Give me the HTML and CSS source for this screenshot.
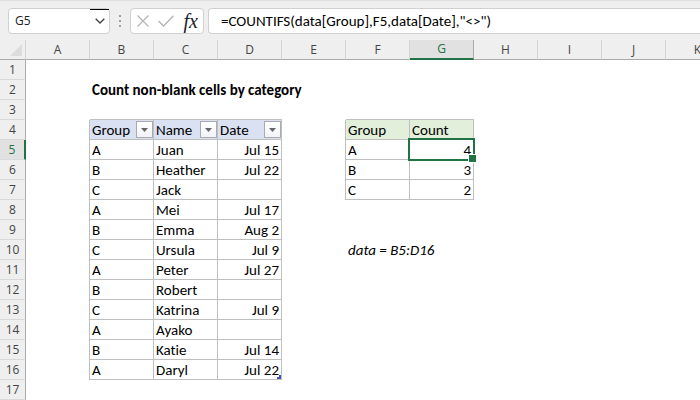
FILE: index.html
```
<!DOCTYPE html>
<html lang="en">
<head>
    <meta charset="UTF-8">
    <meta name="viewport" content="width=device-width, initial-scale=1.0">
    <title>Count non-blank cells by category</title>
    <link rel="stylesheet" href="styles.css">
</head>
<body>
    <div class="formula-bar">
        <div class="box name-box">
            <input type="text" value="G5" aria-label="Name box">
            <button type="button" aria-label="Show names">
                <svg width="10" height="6" viewBox="0 0 10 6"><path d="M.7 .7 5 5 9.3 .7" fill="none" stroke="#444" stroke-width="1.4"/></svg>
            </button>
        </div>
        <svg class="grip" width="2" height="12" viewBox="0 0 2 12"><path d="M0 0h2v2H0zM0 5h2v2H0zM0 10h2v2H0z" fill="#a0a0a0"/></svg>
        <div class="box tools">
            <button type="button" aria-label="Cancel">
                <svg width="12" height="12" viewBox="0 0 12 12"><path d="M.5 .5l11 11M11.5 .5l-11 11" fill="none" stroke="#b4b4b4" stroke-width="1.2"/></svg>
            </button>
            <button type="button" aria-label="Enter">
                <svg width="16" height="12" viewBox="0 0 16 12"><path d="M.5 6l5 5L15.5 .7" fill="none" stroke="#b4b4b4" stroke-width="1.3"/></svg>
            </button>
            <button type="button" class="fx" aria-label="Insert function">fx</button>
        </div>
        <div class="box formula">
            <input type="text" value="=COUNTIFS(data[Group],F5,data[Date],&quot;&lt;&gt;&quot;)" aria-label="Formula">
        </div>
    </div>

    <div class="sheet">
        <table>
            <colgroup>
                <col class="num">
                <col span="11">
            </colgroup>
            <thead>
                <tr>
                    <th class="corner"><svg width="12" height="12" viewBox="0 0 12 12"><path d="M12 0v12H0z" fill="#dcdcdc"/></svg></th>
                    <th>A</th><th>B</th><th>C</th><th>D</th><th>E</th><th>F</th><th class="active">G</th><th>H</th><th>I</th><th>J</th><th>K</th>
                </tr>
            </thead>
            <tbody>
                <tr><th>1</th><td colspan="11"></td></tr>
                <tr><th>2</th><td></td><td class="title" colspan="10">Count non-blank cells by category</td></tr>
                <tr><th>3</th><td></td><td class="line" colspan="3"></td><td></td><td class="line" colspan="2"></td><td colspan="4"></td></tr>
                <tr>
                    <th>4</th><td class="edge"></td>
                    <td class="cell blue"><div class="filter">Group<button type="button" aria-label="Filter Group"><svg width="7" height="4" viewBox="0 0 7 4"><path d="M0 0h7L3.5 4z"/></svg></button></div></td>
                    <td class="cell blue"><div class="filter">Name<button type="button" aria-label="Filter Name"><svg width="7" height="4" viewBox="0 0 7 4"><path d="M0 0h7L3.5 4z"/></svg></button></div></td>
                    <td class="cell blue"><div class="filter">Date<button type="button" aria-label="Filter Date"><svg width="7" height="4" viewBox="0 0 7 4"><path d="M0 0h7L3.5 4z"/></svg></button></div></td>
                    <td class="edge"></td><td class="cell green">Group</td><td class="cell green">Count</td><td colspan="4"></td>
                </tr>
                <tr><th class="active">5</th><td class="edge"></td><td class="cell">A</td><td class="cell">Juan</td><td class="cell right">Jul 15</td><td class="edge"></td><td class="cell">A</td><td class="cell right selected">4</td><td colspan="4"></td></tr>
                <tr><th>6</th><td class="edge"></td><td class="cell">B</td><td class="cell">Heather</td><td class="cell right">Jul 22</td><td class="edge"></td><td class="cell">B</td><td class="cell right">3</td><td colspan="4"></td></tr>
                <tr><th>7</th><td class="edge"></td><td class="cell">C</td><td class="cell">Jack</td><td class="cell right"></td><td class="edge"></td><td class="cell">C</td><td class="cell right">2</td><td colspan="4"></td></tr>
                <tr><th>8</th><td class="edge"></td><td class="cell">A</td><td class="cell">Mei</td><td class="cell right">Jul 17</td><td colspan="7"></td></tr>
                <tr><th>9</th><td class="edge"></td><td class="cell">B</td><td class="cell">Emma</td><td class="cell right">Aug 2</td><td colspan="7"></td></tr>
                <tr><th>10</th><td class="edge"></td><td class="cell">C</td><td class="cell">Ursula</td><td class="cell right">Jul 9</td><td></td><td class="note" colspan="6">data = B5:D16</td></tr>
                <tr><th>11</th><td class="edge"></td><td class="cell">A</td><td class="cell">Peter</td><td class="cell right">Jul 27</td><td colspan="7"></td></tr>
                <tr><th>12</th><td class="edge"></td><td class="cell">B</td><td class="cell">Robert</td><td class="cell right"></td><td colspan="7"></td></tr>
                <tr><th>13</th><td class="edge"></td><td class="cell">C</td><td class="cell">Katrina</td><td class="cell right">Jul 9</td><td colspan="7"></td></tr>
                <tr><th>14</th><td class="edge"></td><td class="cell">A</td><td class="cell">Ayako</td><td class="cell right"></td><td colspan="7"></td></tr>
                <tr><th>15</th><td class="edge"></td><td class="cell">B</td><td class="cell">Katie</td><td class="cell right">Jul 14</td><td colspan="7"></td></tr>
                <tr><th>16</th><td class="edge"></td><td class="cell">A</td><td class="cell">Daryl</td><td class="cell right table-end">Jul 22</td><td colspan="7"></td></tr>
                <tr><th>17</th><td colspan="11"></td></tr>
            </tbody>
        </table>
    </div>
</body>
</html>
```
FILE: styles.css
```
* {
    box-sizing: border-box;
}
body {
    margin: 0;
    background: white;
    font-family: Carlito, Lato, sans-serif;
    font-size: 15px;
    font-variant-ligatures: none;
    color: black;
}
button, input {
    border: none;
    background: none;
    padding: 0;
    margin: 0;
    font: inherit;
    color: inherit;
}
svg {
    display: block;
}

/* Formula bar */
.formula-bar {
    display: flex;
    align-items: center;
    height: 40px;
    padding-left: 8px;
    border-top: 1px solid #dedede;
    background: #efefef;
    overflow: hidden;
}
.box {
    display: flex;
    align-items: center;
    height: 26px;
    border: 1px solid #d0d0d0;
    border-radius: 4px;
    background: white;
}
.name-box {
    width: 102px;
    padding-left: 6px;
    font-family: "Open Sans", sans-serif;
    font-size: 12px;
    color: #222;
}
.name-box input {
    flex: 1;
    min-width: 0;
}
.name-box button {
    display: flex;
    align-items: center;
    justify-content: center;
    width: 19px;
    height: 24px;
    border-top: 1px solid black;
}
.grip {
    margin: 0 9px;
}
.tools {
    width: 74px;
    padding: 0 5px 0 6px;
    justify-content: space-between;
}
.fx {
    font-family: "Liberation Serif", serif;
    font-size: 20px;
    font-style: italic;
    line-height: 20px;
    color: #222;
}
.formula {
    flex: 1;
    margin-left: 4px;
    padding-left: 12px;
    border-right: none;
    border-radius: 4px 0 0 4px;
}
.formula input {
    width: 100%;
}

/* Grid */
.sheet {
    overflow: hidden;
}
table {
    width: 730px;
    table-layout: fixed;
    border-collapse: separate;
    border-spacing: 0;
}
col {
    width: 64px;
}
.num {
    width: 26px;
}
th, td {
    height: 20px;
    padding: 0;
    line-height: 19px;
    white-space: nowrap;
}
th {
    font-family: "Open Sans", sans-serif;
    font-size: 12px;
    font-weight: normal;
    color: #444;
    background: #efefef;
}
thead th {
    border-bottom: 1px solid #ababab;
    border-right: 1px solid #d4d4d4;
}
thead .corner svg {
    margin-left: 10px;
}
thead .active {
    background: #e1e1e1;
    border-bottom: 2px solid #217346;
    border-right-color: #ababab;
    line-height: 18px;
    color: #217346;
}
tbody th {
    border-right: 1px solid #ababab;
    border-bottom: 1px solid #d9d9d9;
}
tbody .active {
    background: #e1e1e1;
    border-right: 2px solid #217346;
    color: #217346;
}
.line, .cell {
    border-bottom: 1px solid #bfbfbf;
}
.edge, .cell {
    border-right: 1px solid #bfbfbf;
}
.title, .note {
    padding: 0 2px;
}
.cell {
    padding: 2px 2px 0;
    line-height: 17px;
}
.title {
    font-weight: bold;
}
.note {
    font-style: italic;
}
.right {
    text-align: right;
}
.blue {
    padding: 0 0 0 2px;
    background: #d9e1f2;
}
.green {
    background: #e2efda;
}
.filter {
    display: flex;
    align-items: flex-end;
    justify-content: space-between;
    height: 19px;
}
.filter button {
    display: flex;
    align-items: center;
    justify-content: center;
    width: 17px;
    height: 17px;
    margin-bottom: 1px;
    border: 1px solid #ababab;
    background: linear-gradient(white, #f1f3f8);
    fill: #666;
}

/* Selected cell outline and its fill handle */
.selected {
    position: relative;
}
.selected::before {
    content: "";
    position: absolute;
    inset: -2px;
    border: 2px solid #217346;
}
.selected::after {
    content: "";
    position: absolute;
    right: -4px;
    bottom: -4px;
    width: 7px;
    height: 7px;
    border: 1px solid white;
    background: #217346;
}
.table-end {
    position: relative;
}
.table-end::after {
    content: "";
    position: absolute;
    right: 0;
    bottom: 0;
    width: 4px;
    height: 4px;
    background: #3f51b5;
    clip-path: polygon(50% 0, 100% 0, 100% 100%, 0 100%, 0 50%, 50% 50%);
}
```
